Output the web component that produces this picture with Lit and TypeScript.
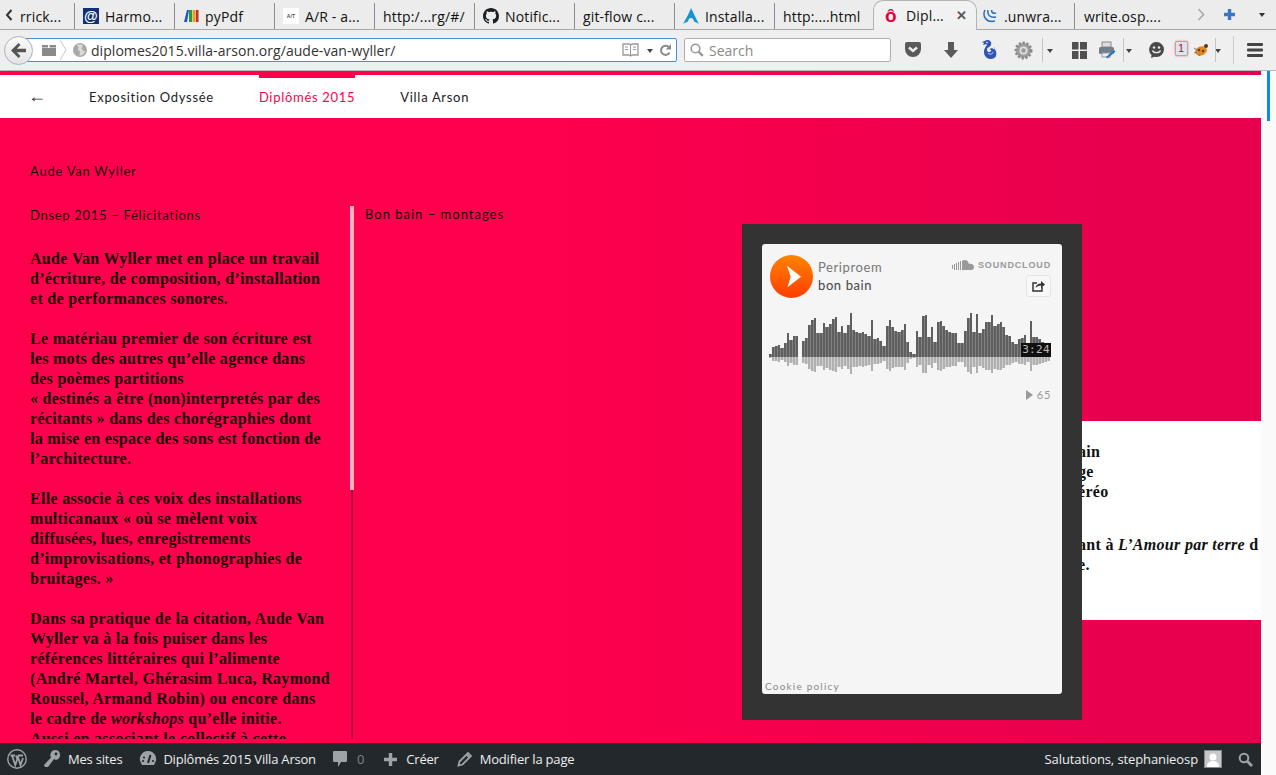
import { LitElement, html, css, svg } from "lit";
import { customElement } from "lit/decorators.js";

const WAVE = [3,10,11,12,9,14,24,17,21,21,0,16,19,32,37,39,24,24,34,30,33,38,40,25,31,24,32,44,27,25,24,25,23,21,37,18,19,16,11,31,37,30,26,25,27,33,15,5,3,26,20,41,42,20,30,15,35,36,31,27,25,24,24,14,14,26,39,44,25,43,24,28,35,35,42,31,33,35,30,22,21,15,13,18,19,22,14,36,20,20,18,15,14,10];

const tabs = [
  { w: 57, t: "rrick...", icon: "none" },
  { w: 100, t: "Harmo...", icon: "at" },
  { w: 100, t: "pyPdf", icon: "pdf" },
  { w: 100, t: "A/R - a...", icon: "ar" },
  { w: 100, t: "http:/...rg/#/", icon: "none" },
  { w: 100, t: "Notific...", icon: "gh" },
  { w: 100, t: "git-flow c...", icon: "none" },
  { w: 100, t: "Installa...", icon: "arch" },
  { w: 98, t: "http:....html", icon: "none" },
];

function tabIcon(k: string) {
  switch (k) {
    case "at": return html`<span class="fav at">@</span>`;
    case "pdf": return html`<svg class="fav" viewBox="0 0 16 16"><path d="M1 14 4 2h2L4 14z" fill="#1a56c4"/><rect x="6" y="2" width="3" height="12" fill="#2a9a3a"/><rect x="9.5" y="2" width="3" height="12" fill="#e0a020"/><rect x="13" y="2" width="2.5" height="12" fill="#cc2a2a"/></svg>`;
    case "ar": return html`<span class="fav ar">A/T</span>`;
    case "gh": return html`<svg class="fav" viewBox="0 0 16 16"><path fill="#1b1f23" d="M8 0C3.58 0 0 3.58 0 8c0 3.54 2.29 6.53 5.47 7.59.4.07.55-.17.55-.38 0-.19-.01-.82-.01-1.49-2.01.37-2.53-.49-2.69-.94-.09-.23-.48-.94-.82-1.13-.28-.15-.68-.52-.01-.53.63-.01 1.08.58 1.23.82.72 1.21 1.87.87 2.33.66.07-.52.28-.87.51-1.07-1.78-.2-3.64-.89-3.64-3.95 0-.87.31-1.59.82-2.15-.08-.2-.36-1.02.08-2.12 0 0 .67-.21 2.2.82.64-.18 1.32-.27 2-.27s1.36.09 2 .27c1.53-1.04 2.2-.82 2.2-.82.44 1.1.16 1.92.08 2.12.51.56.82 1.27.82 2.15 0 3.07-1.87 3.75-3.65 3.95.29.25.54.73.54 1.48 0 1.07-.01 1.93-.01 2.2 0 .21.15.46.55.38A8.01 8.01 0 0016 8c0-4.42-3.58-8-8-8z"/></svg>`;
    case "arch": return html`<svg class="fav" viewBox="0 0 16 16"><path fill="#1793d1" d="M8 0C7.2 2 6.6 3.4 5.8 5.2 3.9 9 2 12.6 0 16c2-1.2 3.6-2 5-2.4.1-1.8 1.4-3.6 3-3.6s2.9 1.8 3 3.6c1.4.4 3 1.2 5 2.4C13 10.5 10.5 5 8 0z"/></svg>`;
    default: return "";
  }
}

const tools: { w: number; i: any }[] = [
  { w: 38, i: svg`<svg width="18" height="18" viewBox="0 0 18 18"><path fill="#5a5a5a" d="M1 3a2 2 0 0 1 2-2h12a2 2 0 0 1 2 2v5a8 8 0 0 1-16 0z"/><path d="M5 6.5 9 10l4-3.5" fill="none" stroke="#eee" stroke-width="2.4"/></svg>` },
  { w: 38, i: svg`<svg width="16" height="18" viewBox="0 0 16 18"><path fill="#5a5a5a" d="M5 1h6v8h4l-7 8-7-8h4z"/></svg>` },
  { w: 38, i: svg`<svg width="15" height="20" viewBox="0 0 15 20"><path fill="#2f55b8" d="M5 0c3 0 5 2 4 5-1 2-4 2-4 5 0 2 3 3 4 1 .6-1.400-1-2-1.500-1 0-2 3-2.500 4.500-.5C14 8 11 6 12 8c2 2 3 5 2 8-1 3-6 4-9 2-3-2-4-7-2-10 1-2 2-3 2-4L1 5l1-2-2-1z"/><path d="M6 13c2 2 5 1 5-1" fill="none" stroke="#cfd8f5" stroke-width="1"/><circle cx="5" cy="2.500" r=".8" fill="#fff"/></svg>` },
  { w: 30, i: svg`<svg width="19" height="19" viewBox="0 0 19 19"><circle cx="9.500" cy="9.500" r="7.500" fill="#a0a0a0" stroke="#8a8a8a" stroke-width="3" stroke-dasharray="2.200 1.600"/><circle cx="9.500" cy="9.500" r="4" fill="#dedede"/><circle cx="9.500" cy="9.500" r="2.200" fill="#9a9a9a"/></svg>` },
  { w: 26, i: html`<span class="sep-l"></span><span class="caret"></span>` },
  { w: 30.5, i: svg`<svg width="15" height="17" viewBox="0 0 15 17" fill="#505050"><rect width="6.5" height="7.5"/><rect x="8" width="7" height="7.5"/><rect y="9" width="6.5" height="8"/><rect x="8" y="9" width="7" height="8"/></svg>` },
  { w: 24, i: svg`<svg width="18" height="18" viewBox="0 0 18 18"><rect x="4" y="1" width="9" height="5" fill="#ddd" stroke="#888"/><rect x="1" y="6" width="15" height="7" rx="1.5" fill="#6f7f8d"/><rect x="4" y="12" width="8" height="4" fill="#eee" stroke="#999"/><path d="M8 16l8-7 1.5 1.5-8 7z" fill="#2a73c9"/></svg>` },
  { w: 23.5, i: html`<span class="sep-l"></span><span class="caret"></span>` },
  { w: 28, i: svg`<svg width="17" height="18" viewBox="0 0 17 18"><path fill="#4a4a4a" d="M8.5 1a7.5 7.5 0 0 1 0 15c-.8 0-1.5-.1-2.2-.3L3 17l.6-3A7.5 7.5 0 0 1 8.5 1z"/><circle cx="6" cy="6.5" r="1.2" fill="#eee"/><circle cx="11" cy="6.5" r="1.2" fill="#eee"/><path d="M4.5 9.5c1 2.8 7 2.8 8 0" fill="none" stroke="#eee" stroke-width="1.4"/></svg>` },
  { w: 22, i: html`<span class="badge">1</span>` },
  { w: 18.5, i: svg`<svg width="16" height="14" viewBox="0 0 16 14"><ellipse cx="8" cy="8" rx="6" ry="4.5" fill="#e08a1e" transform="rotate(-20 8 8)"/><circle cx="6" cy="7" r="1.3" fill="#6a3a10"/><circle cx="10" cy="8" r="1.3" fill="#6a3a10"/><circle cx="13" cy="3" r="2" fill="#5a3a1a"/><path d="M1 5 4 7M1 10l3-1M6 13l1-2" stroke="#777"/></svg>` },
  { w: 16.5, i: html`<span class="sep-l"></span><span class="caret"></span>` },
  { w: 12, i: html`<span class="sep-tall"></span>` },
  { w: 31, i: svg`<svg width="16" height="14" viewBox="0 0 16 14" fill="#444"><rect width="16" height="3" rx="1"/><rect y="5.500" width="16" height="3" rx="1"/><rect y="11" width="16" height="3" rx="1"/></svg>` },
];

@customElement("app-root")
export class AppRoot extends LitElement {
  static styles = css`
    :host { display: block; width: 1276px; height: 775px; overflow: hidden; font-family: "Open Sans", "Noto Sans", sans-serif; background: #fafafa; }
    .tabs { display: flex; height: 29px; background: #ececec; border-bottom: 1px solid #a9a9a9; font-size: 14px; letter-spacing: 0.15px; color: #111; align-items: stretch; }
    .tabprev { width: 18px; display: flex; align-items: center; justify-content: center; color: #333; flex: none; }
    .tab { display: flex; align-items: center; gap: 6px; padding-left: 8px; flex: none; box-sizing: border-box; border-right: 1px solid #8d8d8d; white-space: nowrap; overflow: hidden; margin: 3px 0 0; height: 26px; }
    .tab.first { padding-left: 2px; }
    .tab.plain { border-right: none; }
    .fav { width: 16px; height: 16px; flex: none; display: block; }
    .fav.at { background: #10307a; color: #fff; font: bold 14px/16px "Liberation Sans", sans-serif; text-align: center; }
    .fav.ar { background: #fff; color: #555; font: bold 5px/16px "Liberation Sans", sans-serif; text-align: center; }
    .active { width: 104px; flex: none; box-sizing: border-box; height: 30px; background: linear-gradient(#f2f2f2, #f0f0f0); border: 1px solid #b4b4b4; border-bottom: none; border-radius: 10px 10px 0 0; display: flex; align-items: center; padding: 0 9px 0 11px; gap: 9px; }
    .ohat { color: #e6003c; font: bold 19px/1 "Liberation Sans", sans-serif; width: 12px; }
    .active .lbl { flex: 1; }
    .x { font: bold 13px/1 "Liberation Sans", sans-serif; color: #555; }
    .tabrest { flex: 1; display: flex; align-items: center; }
    .tabrest .tab { padding-left: 5px; }
    .chev { margin-left: 32px; flex: none; }
    .plus { margin-left: 18px; flex: none; }
    .tcaret { margin-left: 23px; width: 0; height: 0; border: 3.5px solid transparent; border-top: 4px solid #333; margin-top: 4px; flex: none; }

    .nav { height: 41px; background: #efefef; display: flex; align-items: center; box-sizing: border-box; border-bottom: 1px solid #b8b8b8; }
    .back { width: 29px; height: 29px; border-radius: 50%; flex: none; margin-left: 4px; background: linear-gradient(#fbfbfb, #e4e4e4); border: 1px solid #b0b0c0; box-sizing: border-box; display: flex; align-items: center; justify-content: center; position: relative; z-index: 1; }
    .url { width: 658px; margin-left: -14px; flex: none; height: 24px; box-sizing: border-box; background: #fff; border: 1px solid #4a90d9; border-radius: 2px; display: flex; align-items: center; padding: 0 4px 0 22px; font-size: 14px; color: #333; }
    .url .folder { margin-right: 4px; }
    .url .crumb { margin-right: 6px; }
    .url .txt { margin-left: 4px; flex: 1; white-space: nowrap; letter-spacing: 0.05px; }
    .mini-caret { width: 0; height: 0; border: 3px solid transparent; border-top: 4px solid #444; margin: 4px 6px 0 8px; }
    .search { width: 207px; margin-left: 7px; height: 24px; flex: none; box-sizing: border-box; background: #fff; border: 1px solid #b0b0b0; border-radius: 2px; display: flex; align-items: center; padding-left: 5px; gap: 5px; font-size: 14px; color: #8a8a8a; }
    .tools { display: flex; align-items: center; margin-left: 3px; height: 30px; flex: none; }
    .tool { display: flex; align-items: center; justify-content: center; position: relative; height: 30px; flex: none; }
    .sep-l { position: absolute; left: 4px; top: 3px; bottom: 3px; width: 1px; background: #c4c4c4; }
    .caret { width: 0; height: 0; border: 3.5px solid transparent; border-top: 4px solid #444; margin-top: 4px; margin-right: 2px; }
    .sep-tall { width: 1px; height: 28px; background: #ccc; display: block; }
    .badge { width: 13px; height: 15px; box-sizing: border-box; background: #dfe3ee; border: 1px solid #c9a0a0; box-shadow: 0 0 2px #c77; border-radius: 2px; font: 11px/13px "Liberation Sans", sans-serif; color: #a01818; text-align: center; margin-top: -4px; }

    .body { display: flex; height: 704px; }
    .main { width: 1261px; flex: none; display: flex; flex-direction: column; position: relative; background: linear-gradient(90deg, #ff004c 0, #ff004c 42%, #e8004e 88%); overflow: hidden; }
    .scroll { flex: 1; background: #fafafa; padding-left: 6px; }
    .thumb-b { width: 3px; height: 50px; background: #0a8fd6; }
    .stripe { height: 4px; flex: none; }
    .sitenav { height: 43px; flex: none; background: #fff; display: flex; align-items: center; padding-left: 30px; font: 400 13px "Lato", sans-serif; letter-spacing: 0.7px; color: #222; position: relative; }
    .sitenav .arrow { width: 59px; font: 18px "Liberation Sans", sans-serif; color: #333; margin-left: -2px; padding-right: 2px; }
    .sitenav .item { margin-right: 45px; }
    .sitenav .on { color: #ff004c; position: relative; align-self: stretch; display: flex; align-items: center; }
    .sitenav .on::before { content: ""; position: absolute; top: 0; left: 0; right: 0; height: 3px; background: #ff004c; }
    .content { flex: 1; min-height: 0; display: flex; flex-direction: column; color: #111; }
    .who { font: 400 13px/20px "Lato", sans-serif; letter-spacing: 0.75px; padding: 43px 0 0 30px; height: 20px; flex: none; color: #14000a; }
    .cols { display: flex; margin-top: 25px; height: 533px; flex: none; }
    .left { width: 320px; flex: none; padding-left: 30px; height: 533px; overflow: hidden; box-sizing: content-box; }
    .sub { font: 400 13px/20px "Lato", sans-serif; letter-spacing: 0.7px; color: #14000a; margin-top: -1px; }
    .txt-b { font: bold 16px/20px "Liberation Serif", serif; letter-spacing: 0.3px; color: #16000a; margin: 24px 0 0; white-space: nowrap; }
    .txt-b p { margin: 0 0 20px; }
    .track { width: 4px; flex: none; display: flex; flex-direction: column; }
    .thumb { height: 284px; background: #ffb3c8; flex: none; }
    .rail { flex: 1; width: 2px; margin-left: 1px; background: #b20042; }
    .right { flex: 1; min-width: 0; padding-left: 11px; display: flex; flex-direction: column; }
    .right h2 { margin: -2px 0 0; font: 400 13px/20px "Lato", sans-serif; letter-spacing: 1px; color: #14000a; }
    .white { margin: 197px 0 0 395px; height: 199px; background: #fff; box-sizing: border-box; padding: 21px 0 0 318px; font: bold 16px/20px "Liberation Serif", serif; letter-spacing: 0.3px; color: #111; white-space: nowrap; overflow: hidden; flex: none; }
    .white p { margin: 0 0 33px; }

    .admin { height: 32px; flex: none; background: #23282d; display: flex; align-items: center; padding: 0 8px 0 7px; color: #eee; font: 13px "Open Sans", sans-serif; letter-spacing: -0.2px; position: relative; z-index: 1; white-space: nowrap; }
    .admin .n { display: flex; align-items: center; margin-right: 17px; gap: 6px; }
    .admin .nw { gap: 8px; margin-right: 18px; }
    .admin .np { gap: 7px; }
    .admin .cm { gap: 7px; margin-right: 19px; }
    .admin .wp { margin-right: 16px; }
    .admin .zero { color: #7f858a; }
    .admin .end { margin-left: auto; display: flex; align-items: center; letter-spacing: -0.1px; }
    .avatar { width: 18px; height: 18px; box-sizing: border-box; border: 1px solid #888; background: #c8c8c8; margin-left: 6px; display: block; }
    .lens { margin-left: 16px; }

    .overlay { position: absolute; left: 742px; top: 153px; width: 340px; height: 496px; background: #333; padding: 20px; box-sizing: border-box; z-index: 2; }
    .card { height: 450px; background: #f5f5f5; border-radius: 3px; display: flex; flex-direction: column; box-sizing: border-box; position: relative; }
    .head { display: flex; padding: 11px 11px 0 8px; height: 44px; flex: none; }
    .play { width: 43px; height: 43px; flex: none; display: block; }
    .meta { margin-left: 5px; font: 13px/18px "Lato", sans-serif; letter-spacing: 0.6px; padding-top: 3px; color: #444; flex: 1; }
    .meta .a { color: #777; }
    .sc { display: flex; flex-direction: column; align-items: flex-end; }
    .brand { display: flex; align-items: center; gap: 4px; font: bold 9px/12px "Liberation Sans", sans-serif; letter-spacing: 0.85px; color: #999; margin-top: 4px; }
    .share { width: 25px; height: 22px; box-sizing: border-box; margin-top: 4px; background: #f8f8f8; border: 1px solid #e4e4e4; border-radius: 3px; display: flex; align-items: center; justify-content: center; }
    .wave { position: relative; height: 62px; margin: 14px 0 0 7px; flex: none; }
    .wave svg { display: block; }
    .time { position: absolute; right: 11px; top: 30px; width: 30px; height: 14px; background: #111; color: #bbb; font: 11px/14px "DejaVu Sans Mono", monospace; text-align: center; letter-spacing: 0.3px; }
    .plays { display: flex; justify-content: flex-end; align-items: center; gap: 4px; padding-right: 11px; margin-top: 14px; font: 11px/12px "Lato", sans-serif; letter-spacing: 0.7px; color: #999; flex: none; }
    .tri { width: 0; height: 0; border: 5px solid transparent; border-left: 7px solid #999; border-right: 0; }
    .cookie { position: absolute; left: 3px; bottom: 2px; font: 10px/12px "Lato", sans-serif; letter-spacing: 1.2px; color: #8a8a8a; }
  `;

  render() {
    const baseline = 44;
    const low = (h: number) => Math.round(h * 0.38);
    return html`
      <div class="tabs">
        <div class="tabprev"><svg width="8" height="12" viewBox="0 0 8 12"><path d="M6.5 1 2 6l4.5 5" fill="none" stroke="#333" stroke-width="2"/></svg></div>
        ${tabs.map((t, i) => html`<div class="tab ${i === 0 ? "first" : ""} ${i === 8 ? "plain" : ""}" style="width:${t.w}px">${tabIcon(t.icon)}<span>${t.t}</span></div>`)}
        <div class="active"><span class="ohat">ô</span><span class="lbl">Dipl...</span><span class="x">✕</span></div>
        <div class="tabrest">
          <div class="tab" style="width:98px"><svg class="fav" viewBox="0 0 16 16"><path d="M3 2C0 8 4 15 13 13M6 2c-1 5 2 8 8 7M10 2c-1 2 1 4 4 3" fill="none" stroke="#2a6fb8" stroke-width="1.5"/></svg><span>.unwra...</span></div>
          <div class="tab plain" style="width:90px;padding-left:9px"><span>write.osp....</span></div>
          <svg class="chev" width="8" height="13" viewBox="0 0 8 13"><path d="M1.5 1 6.5 6.5 1.5 12" fill="none" stroke="#aaa" stroke-width="1.6"/></svg>
          <svg class="plus" width="13" height="13" viewBox="0 0 13 13"><path d="M6.5 1v11M1 6.5h11" stroke="#3a76c4" stroke-width="3.4"/></svg>
          <span class="tcaret"></span>
        </div>
      </div>
      <div class="nav">
        <div class="back"><svg width="16" height="15" viewBox="0 0 16 15"><path fill="#555" d="M7.5 0 0 7.5 7.5 15l2-2-3.7-3.7H15V5.7H5.8L9.5 2z"/></svg></div>
        <div class="url">
          <svg class="folder" width="14" height="14" viewBox="0 0 14 14" fill="#8a8a8a"><rect x="0" y="2" width="6" height="2.5"/><rect x="7.5" y="2" width="6.5" height="2.5"/><rect y="5" width="14" height="8"/></svg>
          <svg class="crumb" width="7" height="24" viewBox="0 0 7 24"><path d="M0 2l6 10-6 10" fill="none" stroke="#c8c8c8"/></svg>
          <svg width="14" height="14" viewBox="0 0 14 14"><circle cx="7" cy="7" r="7" fill="#a8a8a8"/><path d="M3 2c2 1 3 2 2 4s2 1 2 3-1 3 0 4c3-1 5-3 5-5-2 0-3-1-3-3l1-3C8 1 5 1 3 2z" fill="#d8d8d8"/></svg>
          <span class="txt">diplomes2015.villa-arson.org/aude-van-wyller/</span>
          <svg width="17" height="14" viewBox="0 0 17 14"><path d="M1 1h6l1.5 1L10 1h6v11h-6l-1.5 1L7 12H1z" fill="#fff" stroke="#999" stroke-width="1.3"/><path d="M8.5 2v10M3 4h3M3 6.500h3M11 4h3M11 6.500h3" stroke="#999"/></svg>
          <span class="mini-caret"></span>
          <svg width="13" height="13" viewBox="0 0 13 13"><path d="M10.500 8.500a4.500 4.500 0 1 1-.5-5" fill="none" stroke="#8a8a8a" stroke-width="2"/><path d="M12 0v5.500H6.800z" fill="#8a8a8a"/></svg>
        </div>
        <div class="search">
          <svg width="14" height="14" viewBox="0 0 14 14"><circle cx="5.500" cy="5.500" r="4.300" fill="none" stroke="#999" stroke-width="1.600"/><path d="M8.800 8.800l4 4" stroke="#999" stroke-width="2.400"/></svg>
          <span>Search</span>
        </div>
        <div class="tools">${tools.map((t) => html`<div class="tool" style="width:${t.w}px">${t.i}</div>`)}</div>
      </div>
      <div class="body">
        <div class="main">
          <div class="stripe"></div>
          <div class="sitenav">
            <span class="arrow">←</span>
            <span class="item">Exposition Odyssée</span>
            <span class="item on">Diplômés 2015</span>
            <span class="item">Villa Arson</span>
          </div>
          <div class="content">
            <div class="who">Aude Van Wyller</div>
            <div class="cols">
              <div class="left">
                <div class="sub">Dnsep 2015 – Félicitations</div>
                <div class="txt-b">
                  <p>Aude Van Wyller met en place un travail<br>d’écriture, de composition, d’installation<br>et de performances sonores.</p>
                  <p>Le matériau premier de son écriture est<br>les mots des autres qu’elle agence dans<br>des poèmes partitions<br>« destinés a être (non)interpretés par des<br>récitants » dans des chorégraphies dont<br>la mise en espace des sons est fonction de<br>l’architecture.</p>
                  <p>Elle associe à ces voix des installations<br>multicanaux « où se mèlent voix<br>diffusées, lues, enregistrements<br>d’improvisations, et phonographies de<br>bruitages. »</p>
                  <p>Dans sa pratique de la citation, Aude Van<br>Wyller va à la fois puiser dans les<br>références littéraires qui l’alimente<br>(André Martel, Ghérasim Luca, Raymond<br>Roussel, Armand Robin) ou encore dans<br>le cadre de <em>workshops</em> qu’elle initie.<br>Aussi en associant le collectif à cette</p>
                </div>
              </div>
              <div class="track"><div class="thumb"></div><div class="rail"></div></div>
              <div class="right">
                <h2>Bon bain – montages</h2>
                <div class="white">
                  <p>ain<br>ge<br>éréo</p>
                  <p>ant à <em>L’Amour par terre</em> d<br>e.</p>
                </div>
              </div>
            </div>
          </div>
          <div class="admin">
            <div class="n wp"><svg width="20" height="20" viewBox="0 0 20 20"><circle cx="10" cy="10" r="9.200" fill="none" stroke="#9ea3a8" stroke-width="1.400"/><path d="M3.500 6.500h4.500M11 6.500h5M5 6.500l3.300 9.500 2-6-1.300-3.500M10.500 6.500l3 9.500 2.500-7" fill="none" stroke="#9ea3a8" stroke-width="1.800"/></svg></div>
            <div class="n np"><svg width="18" height="20" viewBox="0 0 18 20"><path fill="#9ea3a8" d="M12 1a5 5 0 0 1 1 9.900L11 10 5 18H2l-1-2 7-7.500A5 5 0 0 1 12 1z"/><circle cx="13" cy="5" r="1.400" fill="#23282d"/></svg><span>Mes sites</span></div>
            <div class="n"><svg width="18" height="18" viewBox="0 0 18 18"><path fill="#9ea3a8" d="M9 1a8 8 0 0 1 7 12l-1 2H3l-1-2A8 8 0 0 1 9 1z"/><path d="M9 13 11.500 5" stroke="#23282d" stroke-width="2"/><circle cx="5" cy="7.500" r="1.100" fill="#23282d"/><circle cx="4" cy="11" r="1.100" fill="#23282d"/><circle cx="14" cy="11" r="1.100" fill="#23282d"/></svg><span>Diplômés 2015 Villa Arson</span></div>
            <div class="n cm"><svg width="14" height="18" viewBox="0 0 14 18"><path fill="#9ea3a8" d="M1 1h12a1 1 0 0 1 1 1v9a1 1 0 0 1-1 1H8l-3 5v-5H1a1 1 0 0 1-1-1V2a1 1 0 0 1 1-1z"/></svg><span class="zero">&nbsp;0</span></div>
            <div class="n nw"><svg width="15" height="15" viewBox="0 0 15 15"><path d="M7.500 1v13M1 7.500h13" stroke="#9ea3a8" stroke-width="3.400"/></svg><span>Créer</span></div>
            <div class="n np"><svg width="16" height="16" viewBox="0 0 16 16"><path fill="none" stroke="#9ea3a8" stroke-width="1.800" d="M1.500 14.500l1-4L11 2l3 3-8.500 8.500z"/><path d="M9.500 3.500l3 3" stroke="#9ea3a8" stroke-width="1.800"/></svg><span>Modifier la page</span></div>
            <div class="end">
              <span>Salutations, stephanieosp</span>
              <svg class="avatar" viewBox="0 0 16 16"><circle cx="8" cy="6" r="3.500" fill="#fff"/><path d="M2 16c0-5 3-6 6-6s6 1 6 6z" fill="#fff"/></svg>
              <svg class="lens" width="15" height="15" viewBox="0 0 15 15"><circle cx="6" cy="6" r="4.300" fill="none" stroke="#9ea3a8" stroke-width="2"/><path d="M9.500 9.500l4.500 4.500" stroke="#9ea3a8" stroke-width="2.800"/></svg>
            </div>
          </div>
          <div class="overlay">
            <div class="card">
              <div class="head">
                <svg class="play" viewBox="0 0 43 43"><defs><linearGradient id="pg" x1="0" y1="0" x2="0" y2="1"><stop offset="0" stop-color="#ff8400"/><stop offset="1" stop-color="#ff3c00"/></linearGradient></defs><circle cx="21.500" cy="21.500" r="21.500" fill="url(#pg)"/><path d="M17 10.700 31 21.700 17.500 32.300 20.700 21.700z" fill="#fff"/></svg>
                <div class="meta"><div class="a">Periproem</div><div>bon bain</div></div>
                <div class="sc">
                  <div class="brand"><svg width="22" height="10" viewBox="0 0 22 10" fill="#999"><rect x="0" y="5" width="1" height="4"/><rect x="2" y="4" width="1" height="6"/><rect x="4" y="3" width="1" height="7"/><rect x="6" y="2" width="1" height="8"/><rect x="8" y="1" width="1" height="9"/><path d="M10 10V1c3-2 6-1 7 3 3-1 5 1 5 3s-1 3-3 3z"/></svg><span>SOUNDCLOUD</span></div>
                  <div class="share"><svg width="13" height="12" viewBox="0 0 13 12"><path d="M5 3H1v8h9V7" fill="none" stroke="#333" stroke-width="1.500"/><path d="M3.500 8C4 5 6 3.500 9 3.500V1l4 3.500L9 8V5.500C6.500 5.500 5 6.500 3.500 8z" fill="#333"/></svg></div>
                </div>
              </div>
              <div class="wave">
                <svg width="284" height="62" viewBox="0 0 284 62">
                  ${WAVE.map((h, i) => svg`<rect x="${i * 3}" y="${baseline - h}" width="2" height="${h}" fill="#5f5f5f"/>`)}
                  ${WAVE.map((h, i) => { const g = Math.min(h, WAVE[i + 1] ?? 0); return svg`<rect x="${i * 3 + 2}" y="${baseline - g}" width="1" height="${g}" fill="#808080"/>`; })}
                  ${WAVE.map((h, i) => svg`<rect x="${i * 3}" y="${baseline}" width="2" height="${low(h)}" fill="#b0b0b0"/>`)}
                  ${WAVE.map((h, i) => { const g = Math.min(low(h), low(WAVE[i + 1] ?? 0)); return svg`<rect x="${i * 3 + 2}" y="${baseline}" width="1" height="${g}" fill="#cfcfcf"/>`; })}
                </svg>
                <div class="time">3:24</div>
              </div>
              <div class="plays"><span class="tri"></span><span>65</span></div>
              <div class="cookie">Cookie policy</div>
            </div>
          </div>
        </div>
        <div class="scroll"><div class="thumb-b"></div></div>
      </div>
    `;
  }
}
